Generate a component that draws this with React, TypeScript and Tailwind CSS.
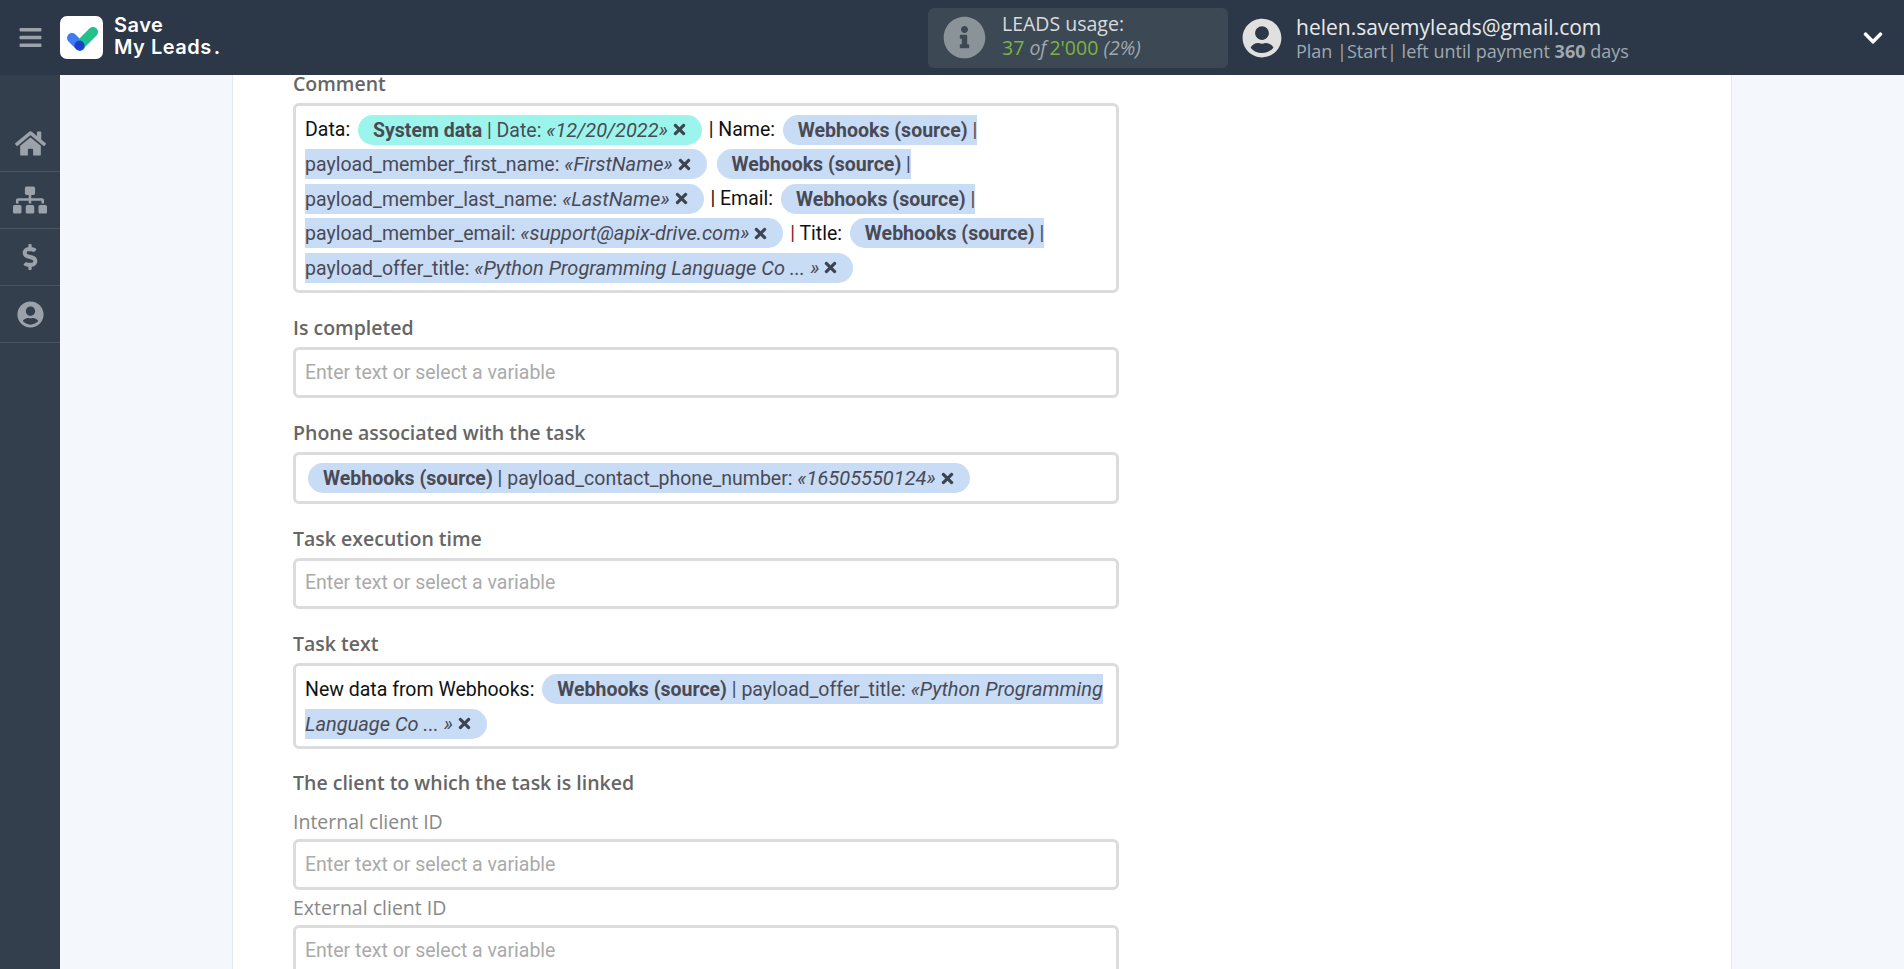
import { ReactNode } from "react";
import { FaBars, FaChevronDown, FaDollarSign, FaHome, FaInfoCircle, FaSitemap, FaTimes, FaUserCircle } from "react-icons/fa";

function Chip({ name, field, value, teal }: { name: string; field: string; value: string; teal?: boolean }) {
  return (
    <span className={`ml-[3px] mr-[2px] rounded-[15px] py-[3.5px] pl-[15px] pr-[14px] text-[#4a4a55] ${teal ? "bg-[#9cf5ec]" : "bg-[#c8dcf5]"}`}>
      <b className="font-bold">{name}</b> | {field}: <i className="text-[20px] leading-[20px]">«{value}»</i>
      <FaTimes className="ml-[3px] inline-block align-[-2px] text-[17px] text-[#3d4450]" />
    </span>
  );
}

function Field({ label, sub, children }: { label: string; sub?: boolean; children: ReactNode }) {
  return (
    <div className={sub ? "mb-[6px]" : "mb-[23px]"}>
      <div className={sub ? "mb-[5px] h-[24px] text-[19.5px] leading-[24px] text-[#888]" : "mb-[7px] h-[24px] text-[19.5px] font-semibold leading-[24px] text-[#666]"}>
        {label}
      </div>
      {children}
    </div>
  );
}

function TextBox({ children }: { children: ReactNode }) {
  return (
    <div className="rounded-md border-[3px] border-[#dcdcdc] bg-white px-[9px] pb-[4px] pt-[7px] font-['Roboto',sans-serif] text-[19.5px] leading-[34.6px] text-[#111]">
      {children}
    </div>
  );
}

function EmptyBox() {
  return (
    <div className="flex h-[51px] items-center rounded-md border-[3px] border-[#dcdcdc] bg-white px-[9px] font-['Roboto',sans-serif] text-[19.5px] text-[#aaa]">
      Enter text or select a variable
    </div>
  );
}

const nav = [
  <FaHome className="text-[31px] text-[#9ba2a9]" />,
  <FaSitemap className="text-[34px] text-[#9ba2a9]" />,
  <FaDollarSign className="text-[26px] text-[#9ba2a9]" />,
  <FaUserCircle className="text-[27px] text-[#9ba2a9]" />,
];

export default function App() {
  return (
    <div className="flex h-screen flex-col overflow-hidden font-['Open_Sans',sans-serif]">
      {/* HEADER */}
      <header className="flex h-[75px] shrink-0 items-center bg-[#2c3847]">
        <div className="flex w-[60px] justify-center">
          <FaBars className="text-[25px] text-[#9ba2a9]" />
        </div>
        <svg width="43" height="43" viewBox="0 0 43 43">
          <rect width="43" height="43" rx="7" fill="#fff" />
          <path d="M12 22 L20 30" stroke="#3f7bf5" strokeWidth="10" strokeLinecap="round" />
          <path d="M20 29 L33 16" stroke="#22c08a" strokeWidth="10" strokeLinecap="round" />
          <circle cx="19.5" cy="29.5" r="5" fill="#1d3fd0" />
        </svg>
        <div className="mb-[4px] ml-[11px] w-[814px] font-['Inter',sans-serif] text-[20px] font-semibold leading-[22px] tracking-[0.5px] text-white">
          Save
          <br />
          My Leads<span className="ml-[2px]">.</span>
        </div>

        <div className="flex h-[60px] w-[300px] items-center rounded-md bg-[#3c4853] pl-[15px]">
          <FaInfoCircle className="text-[43px] text-[#8a9398]" />
          <div className="mb-[4px] ml-[16px] text-[19.5px] leading-[24px] text-[#d8dcde]">
            LEADS usage:
            <div className="text-[#7cb342]">
              37 <i className="mr-[3px] text-[#a0a8b0]">of</i>2'000 <i className="text-[#a0a8b0]">(2%)</i>
            </div>
          </div>
        </div>

        <FaUserCircle className="ml-[14px] text-[40px] text-[#e0e0e0]" />
        <div className="ml-[14px] flex-1">
          <div className="text-[21px] leading-[26px] text-[#e8eaec]">helen.savemyleads@gmail.com</div>
          <div className="text-[18px] leading-[22px] text-[#a0a8b0]">
            Plan |Start| left until payment <b>360</b> days
          </div>
        </div>
        <FaChevronDown className="mr-[20px] text-[22px] text-white" />
      </header>

      <div className="flex min-h-0 flex-1">
        {/* SIDEBAR */}
        <nav className="w-[60px] shrink-0 bg-[#343f4e] pt-[40px]">
          {nav.map((icon, i) => (
            <div key={i} className="flex h-[57px] items-center justify-center border-b border-[#4a5563]">
              {icon}
            </div>
          ))}
        </nav>

        <main className="flex-1 overflow-hidden bg-[#f4f7fc] pl-[172px] pr-[172px]">
          <div className="h-[1000px] border-x border-[#e4e9f0] bg-white pl-[60px]">
            <div className="-mt-[3px] w-[826px]">
              <Field label="Comment">
                <TextBox>
                  Data: <Chip teal name="System data" field="Date" value="12/20/2022" /> | Name:{" "}
                  <Chip name="Webhooks (source)" field="payload_member_first_name" value="FirstName" />{" "}
                  <Chip name="Webhooks (source)" field="payload_member_last_name" value="LastName" /> | Email:{" "}
                  <Chip name="Webhooks (source)" field="payload_member_email" value="support@apix-drive.com" />{" "}
                  <span className="text-[#8b1a1a]">|</span> Title:{" "}
                  <Chip name="Webhooks (source)" field="payload_offer_title" value="Python Programming Language Co ... " />
                </TextBox>
              </Field>
              <Field label="Is completed">
                <EmptyBox />
              </Field>
              <Field label="Phone associated with the task">
                <TextBox>
                  <Chip name="Webhooks (source)" field="payload_contact_phone_number" value="16505550124" />
                </TextBox>
              </Field>
              <Field label="Task execution time">
                <EmptyBox />
              </Field>
              <Field label="Task text">
                <TextBox>
                  New data from Webhooks:{" "}
                  <Chip name="Webhooks (source)" field="payload_offer_title" value="Python Programming Language Co ... " />
                </TextBox>
              </Field>
              <div className="-mt-px mb-[15px] h-[24px] text-[19.5px] font-semibold leading-[24px] text-[#666]">
                The client to which the task is linked
              </div>
              <Field sub label="Internal client ID">
                <EmptyBox />
              </Field>
              <Field sub label="External client ID">
                <EmptyBox />
              </Field>
            </div>
          </div>
        </main>
      </div>
    </div>
  );
}
